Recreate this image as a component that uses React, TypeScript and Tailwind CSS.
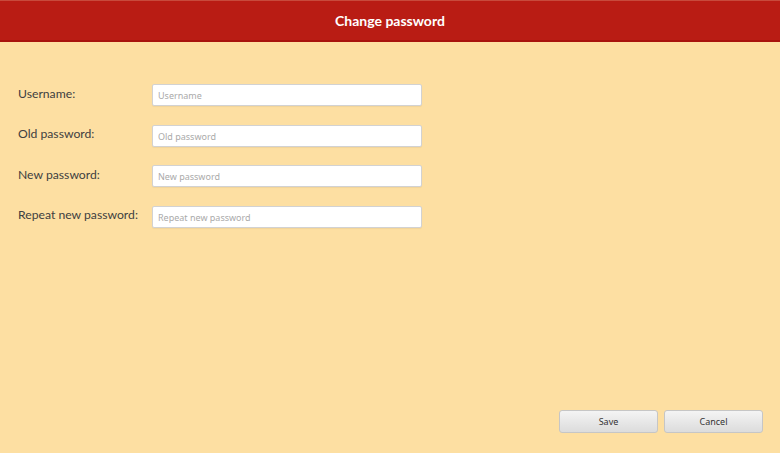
import React from "react";

const fields = [
  { label: "Username:", placeholder: "Username", type: "text" },
  { label: "Old password:", placeholder: "Old password", type: "password" },
  { label: "New password:", placeholder: "New password", type: "password" },
  { label: "Repeat new password:", placeholder: "Repeat new password", type: "password" },
];

export default function App() {
  return (
    <div
      className="w-[780px] h-[453px] flex flex-col bg-[#fddfa2] text-[#333]"
      style={{ fontFamily: 'Lato, "Noto Sans", sans-serif' }}
    >
      <div className="h-[42px] shrink-0 bg-[#b91c14] border-t border-t-[#c84a3c] border-b-2 border-b-[#a8130d] flex items-center justify-center">
        <h1 className="text-white font-bold text-[14px]">Change password</h1>
      </div>

      <form className="flex flex-col gap-[18.5px] pt-[42px] pl-[18px]">
        {fields.map((f) => (
          <div key={f.label} className="flex items-center h-[22px]">
            <label className="w-[134px] text-[12.2px] text-[#404040] -mt-[2px]">{f.label}</label>
            <input
              type={f.type}
              placeholder={f.placeholder}
              className="w-[270px] h-[22px] bg-white border border-[#d2d2d2] rounded-[2px] px-[5px] pt-[1px] text-[9px] placeholder:text-[#aaa] shadow-[0_1px_1px_rgba(0,0,0,0.05)] outline-none"
              style={{ fontFamily: '"Noto Sans", sans-serif' }}
            />
          </div>
        ))}
      </form>

      <div className="flex-1" />

      <div className="flex justify-end gap-[6px] pr-[17px] pb-[20px]">
        <button className="w-[99px] h-[23px] rounded-[3px] border border-[#c6c6c6] bg-gradient-to-b from-[#f4f4f4] to-[#dcdcdc] text-[9px] text-[#333]" style={{ fontFamily: '"Noto Sans", sans-serif' }}>
          Save
        </button>
        <button className="w-[99px] h-[23px] rounded-[3px] border border-[#c6c6c6] bg-gradient-to-b from-[#f4f4f4] to-[#dcdcdc] text-[9px] text-[#333]" style={{ fontFamily: '"Noto Sans", sans-serif' }}>
          Cancel
        </button>
      </div>
    </div>
  );
}
